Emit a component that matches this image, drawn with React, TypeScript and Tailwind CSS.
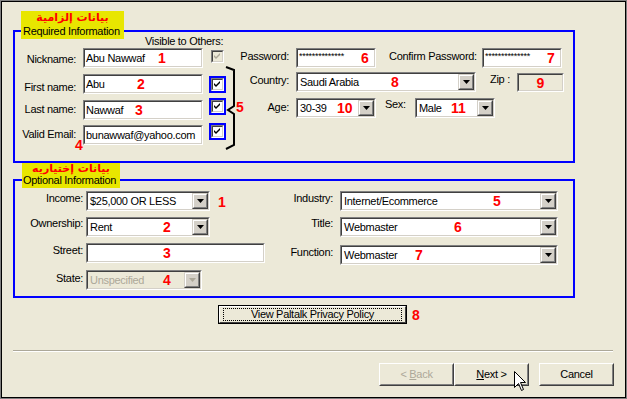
import React from "react";

const Num = ({ children, className = "" }: { children: React.ReactNode; className?: string }) => (
  <span className={`text-[14px] font-bold leading-none tracking-normal text-[#ff0000] ${className}`}>{children}</span>
);

const Sunken = ({
  className = "",
  inner = "bg-white",
  children,
}: {
  className?: string;
  inner?: string;
  children?: React.ReactNode;
}) => (
  <div className={`border border-t-[#808080] border-l-[#808080] border-b-white border-r-white ${className}`}>
    <div className={`h-full w-full border border-t-[#404040] border-l-[#404040] border-b-[#d4d0c8] border-r-[#d4d0c8] ${inner}`}>
      {children}
    </div>
  </div>
);

const TextBox = ({
  w,
  value = "",
  num,
  valueW = "",
  small,
}: {
  w: string;
  value?: string;
  num?: string;
  valueW?: string;
  small?: boolean;
}) => (
  <Sunken className={`${w} h-[20px]`}>
    <div className="flex h-full items-center overflow-hidden pl-[1px]">
      <span className={`shrink-0 whitespace-nowrap ${valueW} ${small ? "self-start pt-[2px] text-[9px] leading-[9px]" : ""}`}>{value}</span>
      {num && <Num>{num}</Num>}
    </div>
  </Sunken>
);

const DropBtn = ({ disabled }: { disabled?: boolean }) => (
  <div className="h-full w-[16px] shrink-0 border border-t-[#d4d0c8] border-l-[#d4d0c8] border-b-[#404040] border-r-[#404040]">
    <div className="flex h-full w-full items-center justify-center border border-t-white border-l-white border-b-[#808080] border-r-[#808080] bg-[#d4d0c8]">
      <svg width="7" height="4" viewBox="0 0 7 4">
        <polygon points="0,0 7,0 3.5,4" fill={disabled ? "#aca899" : "#000"} />
      </svg>
    </div>
  </div>
);

const Select = ({
  w,
  value,
  num,
  valueW = "",
  disabled,
}: {
  w: string;
  value: string;
  num?: string;
  valueW?: string;
  disabled?: boolean;
}) => (
  <Sunken className={`${w} h-[20px]`} inner={disabled ? "bg-[#ece9d8]" : "bg-white"}>
    <div className="flex h-full items-stretch">
      <div className="flex flex-1 items-center pl-[2px]">
        <span className={`shrink-0 whitespace-nowrap ${valueW} ${disabled ? "text-[#aca899]" : ""}`}>{value}</span>
        {num && <Num>{num}</Num>}
      </div>
      <DropBtn disabled={disabled} />
    </div>
  </Sunken>
);

const Check = ({ disabled, hl, className = "" }: { disabled?: boolean; hl?: boolean; className?: string }) => (
  <div className={`border-2 ${hl ? "border-[#0000ff]" : "border-transparent"} ${className}`}>
    <Sunken className="h-[13px] w-[13px]" inner={disabled ? "bg-[#ece9d8]" : "bg-white"}>
      <svg width="9" height="9" viewBox="0 0 9 9" className="block">
        <polygon points="1,3 3,5 7,1 7,3 3,7 1,5" fill={disabled ? "#aca899" : "#000"} />
      </svg>
    </Sunken>
  </div>
);

const WinButton = ({ children, className = "" }: { children: React.ReactNode; className?: string }) => (
  <div className={`h-[23px] w-[75px] border border-t-white border-l-white border-b-[#404040] border-r-[#404040] ${className}`}>
    <div className="flex h-full w-full items-center justify-center border border-t-[#ece9d8] border-l-[#ece9d8] border-b-[#808080] border-r-[#808080] bg-[#ece9d8]">
      {children}
    </div>
  </div>
);

const Label = ({ children, className = "", left }: { children: React.ReactNode; className?: string; left?: boolean }) => (
  <div className={`shrink-0 whitespace-nowrap leading-[13px] ${left ? "text-left" : "text-right"} ${className}`}>{children}</div>
);

export default function App() {
  return (
    <div className="relative h-[399px] w-[627px] border border-[#808080] bg-[#ece9d8] font-['Liberation_Sans',Arial,sans-serif] text-[11px] tracking-[-0.3px] text-black">
      <div className="flex h-full w-full flex-col border border-black">
        {/* Required */}
        <div className="relative ml-[11px] mt-[28px] flex h-[133px] w-[562px] items-start border-2 border-[#0000ff]">
          <div className="absolute left-[6px] top-[-21px] flex h-[28px] w-[103px] flex-col bg-[#e8e600]">
            <span className="text-center font-['DejaVu_Sans',sans-serif] text-[11px] font-bold leading-[14px] tracking-normal text-[#ff0000]">
              بيانات إلزامية
            </span>
            <span className="whitespace-nowrap pl-[2px] leading-[13px]">Required Information</span>
          </div>

          <div className="flex w-[211px] shrink-0 flex-col pt-[3px]">
            <div className="h-[13px] whitespace-nowrap pl-[130px] leading-[13px]">Visible to Others:</div>
            <div className="flex h-[20px] items-start">
              <Label className="mt-[5px] w-[61px]">Nickname:</Label>
              <div className="ml-[7px]">
                <TextBox w="w-[120px]" value="Abu Nawwaf" num="1" valueW="w-[72px]" />
              </div>
              <Check disabled className="ml-[6px]" />
            </div>
            <div className="mt-[6px] flex h-[20px] items-start">
              <Label className="mt-[7px] w-[61px]">First name:</Label>
              <div className="ml-[7px]">
                <TextBox w="w-[120px]" value="Abu" num="2" valueW="w-[51px]" />
              </div>
              <Check hl className="ml-[6px] mt-[2px]" />
            </div>
            <div className="mt-[6px] flex h-[20px] items-start">
              <Label className="mt-[3px] w-[61px]">Last name:</Label>
              <div className="ml-[7px]">
                <TextBox w="w-[120px]" value="Nawwaf" num="3" valueW="w-[49px]" />
              </div>
              <Check hl className="ml-[6px] mt-[-2px]" />
            </div>
            <div className="mt-[5px] flex h-[20px] items-start">
              <Label className="mt-[3px] w-[61px]">Valid Email:</Label>
              <div className="ml-[7px]">
                <TextBox w="w-[120px]" value="bunawwaf@yahoo.com" />
              </div>
              <Check hl className="ml-[6px] mt-[-2px]" />
            </div>
          </div>

          <div className="ml-[6px] flex flex-col pt-[16px]">
            <div className="flex items-start">
              <Label className="mt-[2px] w-[57px]">Password:</Label>
              <div className="ml-[7px]">
                <TextBox w="w-[80px]" value="**************" num="6" valueW="w-[62px]" small />
              </div>
              <Label left className="ml-[13px] mt-[2px] w-[86px]">Confirm Password:</Label>
              <div className="ml-[7px]">
                <TextBox w="w-[80px]" value="**************" num="7" valueW="w-[62px]" small />
              </div>
            </div>
            <div className="mt-[4px] flex items-start">
              <Label className="mt-[2px] w-[57px]">Country:</Label>
              <div className="ml-[7px]">
                <Select w="w-[180px]" value="Saudi Arabia" num="8" valueW="w-[91px]" />
              </div>
              <Label left className="ml-[14px] mt-[1px] w-[27px]">Zip :</Label>
              <Sunken className="mt-[1px] h-[19px] w-[47px]" inner="bg-[#ece9d8]">
                <div className="flex h-full items-center justify-center">
                  <Num>9</Num>
                </div>
              </Sunken>
            </div>
            <div className="mt-[6px] flex items-start">
              <Label className="mt-[3px] w-[57px]">Age:</Label>
              <div className="ml-[7px]">
                <Select w="w-[80px]" value="30-39" num="10" valueW="w-[37px]" />
              </div>
              <Label left className="ml-[9px] w-[30px]">Sex:</Label>
              <Select w="w-[80px]" value="Male" num="11" valueW="w-[32px]" />
            </div>
          </div>

          <svg className="absolute left-[210px] top-[34px]" width="12" height="84" viewBox="0 0 12 84">
            <polyline points="1,1 9,4 9,40 3,44 9,48 9,79 1,83" fill="none" stroke="#000" strokeWidth="2" />
          </svg>
          <Num className="absolute left-[221px] top-[68px]">5</Num>
          <Num className="absolute left-[60px] top-[106px]">4</Num>
        </div>

        {/* Optional */}
        <div className="relative ml-[11px] mt-[16px] flex h-[119px] w-[562px] items-start border-2 border-[#0000ff]">
          <div className="absolute left-[7px] top-[-18px] flex h-[25px] w-[98px] flex-col bg-[#e8e600]">
            <span className="text-center font-['DejaVu_Sans',sans-serif] text-[11px] font-bold leading-[11px] tracking-normal text-[#ff0000]">
              بيانات إختياريه
            </span>
            <span className="whitespace-nowrap pl-[1px] leading-[13px]">Optional Information</span>
          </div>

          <div className="flex w-[255px] shrink-0 flex-col pt-[10px]">
            <div className="flex h-[20px] items-start">
              <Label className="mt-[1px] w-[68px]">Income:</Label>
              <div className="ml-[3px]">
                <Select w="w-[124px]" value="$25,000 OR LESS" />
              </div>
              <Num className="ml-[8px] mt-[4px]">1</Num>
            </div>
            <div className="mt-[6px] flex h-[20px] items-start">
              <Label className="w-[68px]">Ownership:</Label>
              <div className="ml-[3px]">
                <Select w="w-[124px]" value="Rent" num="2" valueW="w-[73px]" />
              </div>
            </div>
            <div className="mt-[6px] flex h-[20px] items-start">
              <Label className="mt-[1px] w-[68px]">Street:</Label>
              <div className="ml-[3px]">
                <TextBox w="w-[179px]" num="3" valueW="w-[74px]" />
              </div>
            </div>
            <div className="mt-[7px] flex h-[20px] items-start">
              <Label className="mt-[2px] w-[68px]">State:</Label>
              <div className="ml-[3px]">
                <Select w="w-[116px]" value="Unspecified" num="4" valueW="w-[73px]" disabled />
              </div>
            </div>
          </div>

          <div className="flex flex-col pt-[10px]">
            <div className="flex h-[20px] items-start">
              <Label className="mt-[1px] w-[63px]">Industry:</Label>
              <div className="ml-[7px]">
                <Select w="w-[218px]" value="Internet/Ecommerce" num="5" valueW="w-[149px]" />
              </div>
            </div>
            <div className="mt-[6px] flex h-[20px] items-start">
              <Label className="w-[63px]">Title:</Label>
              <div className="ml-[7px]">
                <Select w="w-[218px]" value="Webmaster" num="6" valueW="w-[110px]" />
              </div>
            </div>
            <div className="mt-[8px] flex h-[20px] items-start">
              <Label className="mt-[1px] w-[63px]">Function:</Label>
              <div className="ml-[7px]">
                <Select w="w-[218px]" value="Webmaster" num="7" valueW="w-[71px]" />
              </div>
            </div>
          </div>
        </div>

        {/* Privacy */}
        <div className="ml-[216px] mt-[7px] flex items-center">
          <div className="h-[19px] w-[189px] border border-black">
            <div className="h-full w-full border border-t-white border-l-white border-b-[#404040] border-r-[#404040] bg-[#ece9d8] px-[3px] py-[1px]">
              <div className="flex h-full items-center justify-center border border-dotted border-black leading-[13px]">
                View Paltalk Privacy Policy
              </div>
            </div>
          </div>
          <Num className="ml-[5px]">8</Num>
        </div>

        <div className="ml-[11px] mt-[26px] h-[2px] w-[600px] border-t border-b border-t-[#aca899] border-b-white" />

        <div className="mt-[11px] flex justify-end pr-[11px]">
          <WinButton>
            <span className="text-[#aca899]">
              &lt; <u>B</u>ack
            </span>
          </WinButton>
          <WinButton>
            <span>
              <u>N</u>ext &gt;
            </span>
          </WinButton>
          <WinButton className="ml-[10px]">Cancel</WinButton>
        </div>
      </div>

      <svg className="absolute left-[513px] top-[370px]" width="13" height="21" viewBox="0 0 13 21">
        <path d="M0.5 0.5 L0.5 16.5 L4.5 12.5 L7.5 19.5 L9.5 18.5 L6.5 11.5 L11.5 11.5 Z" fill="#fff" stroke="#000" strokeWidth="1" />
      </svg>
    </div>
  );
}
